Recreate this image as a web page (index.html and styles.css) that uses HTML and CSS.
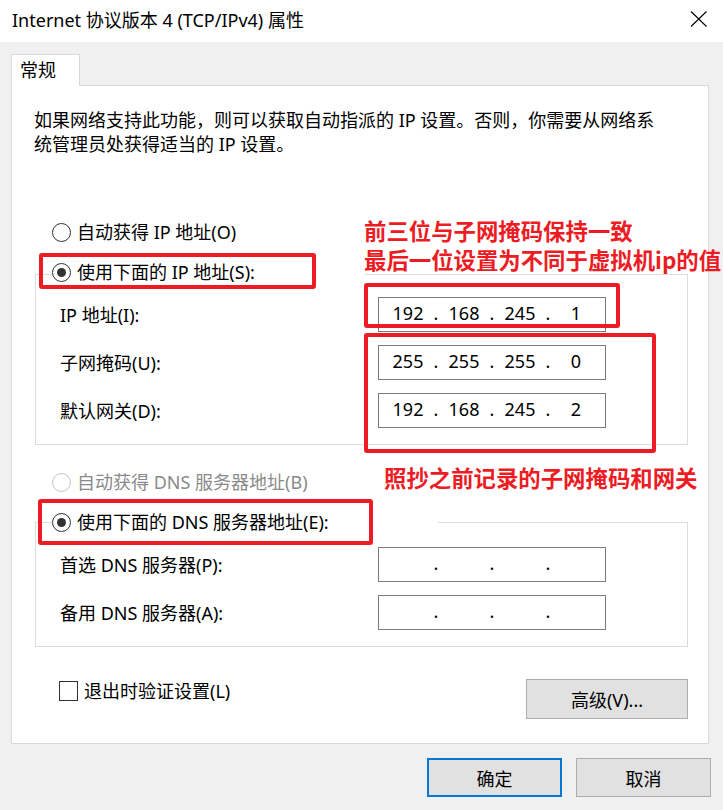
FILE: index.html
```html
<!DOCTYPE html>
<html lang="zh-CN">
  <head>
    <meta charset="UTF-8" />
    <meta name="viewport" content="width=device-width, initial-scale=1.0" />
    <title>Internet 协议版本 4 (TCP/IPv4) 属性</title>
    <link rel="stylesheet" href="styles.css">
  </head>
  <body>
    <div class="window">
      <div class="titlebar">
        <span class="title">Internet 协议版本 4 (TCP/IPv4) 属性</span>
        <svg class="close" width="17" height="16" viewBox="0 0 17 16">
          <path d="M1 0.5L16.5 15.5M16.5 0.5L1 15.5" stroke="#000" stroke-width="1.1" fill="none" />
        </svg>
      </div>

      <div class="content">
        <div class="tabs">
          <div class="tab">常规</div>
        </div>

        <div class="panel">
          <p class="desc">
            如果网络支持此功能，则可以获取自动指派的 IP 设置。否则，你需要从网络系<br />统管理员处获得适当的 IP 设置。
          </p>

          <label class="radio first"><span class="dot"></span>自动获得 IP 地址(O)</label>

          <div class="group">
            <label class="radio legend ip-legend"><span class="dot checked"></span>使用下面的 IP 地址(S):</label>
            <div class="field-row">
              <span class="field-label">IP 地址(I):</span>
              <div class="ip-box">
                <span class="octet">192</span><span class="sep">.</span>
                <span class="octet">168</span><span class="sep">.</span>
                <span class="octet">245</span><span class="sep">.</span>
                <span class="octet">1</span>
              </div>
            </div>
            <div class="field-row">
              <span class="field-label">子网掩码(U):</span>
              <div class="ip-box">
                <span class="octet">255</span><span class="sep">.</span>
                <span class="octet">255</span><span class="sep">.</span>
                <span class="octet">255</span><span class="sep">.</span>
                <span class="octet">0</span>
              </div>
            </div>
            <div class="field-row">
              <span class="field-label">默认网关(D):</span>
              <div class="ip-box">
                <span class="octet">192</span><span class="sep">.</span>
                <span class="octet">168</span><span class="sep">.</span>
                <span class="octet">245</span><span class="sep">.</span>
                <span class="octet">2</span>
              </div>
            </div>
          </div>

          <label class="radio disabled"><span class="dot"></span>自动获得 DNS 服务器地址(B)</label>

          <div class="group dns">
            <label class="radio legend dns-legend"><span class="dot checked"></span>使用下面的 DNS 服务器地址(E):</label>
            <div class="field-row">
              <span class="field-label">首选 DNS 服务器(P):</span>
              <div class="ip-box">
                <span class="octet"></span><span class="sep">.</span>
                <span class="octet"></span><span class="sep">.</span>
                <span class="octet"></span><span class="sep">.</span>
                <span class="octet"></span>
              </div>
            </div>
            <div class="field-row">
              <span class="field-label">备用 DNS 服务器(A):</span>
              <div class="ip-box">
                <span class="octet"></span><span class="sep">.</span>
                <span class="octet"></span><span class="sep">.</span>
                <span class="octet"></span><span class="sep">.</span>
                <span class="octet"></span>
              </div>
            </div>
          </div>

          <div class="options">
            <label class="check"><span class="box"></span>退出时验证设置(L)</label>
            <button type="button" class="btn advanced">高级(V)...</button>
          </div>
        </div>

        <div class="actions">
          <button type="button" class="btn default">确定</button>
          <button type="button" class="btn">取消</button>
        </div>
      </div>

      <!-- red annotations drawn over the dialog -->
      <div class="mark mark-radio-ip"></div>
      <div class="mark mark-ip"></div>
      <div class="mark mark-mask"></div>
      <div class="mark mark-radio-dns"></div>

      <div class="note note-ip">前三位与子网掩码保持一致<br />最后一位设置为不同于虚拟机ip的值</div>
      <div class="note note-mask">照抄之前记录的子网掩码和网关</div>
    </div>
  </body>
</html>
```

FILE: styles.css
```css
body {
  margin: 0;
  background: #f0f0f0;
  font-family: "Noto Sans", "Noto Sans CJK SC", sans-serif;
  font-size: 18px;
  color: #000;
}

.window {
  position: relative;
  width: 723px;
  height: 810px;
  overflow: hidden;
}

.titlebar {
  height: 42px;
  background: #fff;
  display: flex;
  align-items: center;
  justify-content: space-between;
  padding: 0 16px 0 12px;
}

.title {
  line-height: 24px;
  margin-top: -2px;
}

.close {
  margin-top: -4px;
}

.content {
  padding: 12px 14px 0 11px;
}

.tabs {
  display: flex;
}

.tab {
  position: relative;
  z-index: 1;
  box-sizing: border-box;
  width: 69px;
  height: 32px;
  margin-bottom: -1px;
  padding-left: 8px;
  line-height: 30px;
  background: #fff;
  border: 1px solid #d9d9d9;
  border-bottom: none;
}

.panel {
  box-sizing: border-box;
  height: 659px;
  padding: 22px 20px 0 23px;
  background: #fff;
  border: 1px solid #d9d9d9;
}

.desc {
  margin: 0 0 0 -1px;
  line-height: 24px;
}

.radio {
  display: flex;
  align-items: center;
  height: 24px;
  line-height: 24px;
}

.radio.first {
  margin: 64px 0 0 17px;
}

.dot {
  flex: none;
  display: flex;
  align-items: center;
  justify-content: center;
  box-sizing: border-box;
  width: 19px;
  height: 19px;
  margin-right: 6px;
  border: 1px solid #333;
  border-radius: 50%;
  background: #fff;
}

.dot.checked::after {
  content: "";
  width: 9px;
  height: 9px;
  border-radius: 50%;
  background: #333;
}

.radio.disabled {
  margin: 25px 0 0 17px;
  color: #8a8a8a;
}

.radio.disabled .dot {
  border-color: #c4c4c4;
}

.group {
  margin-top: 30px;
  padding-bottom: 16px;
  border: 1px solid #dcdcdc;
}

.group.dns {
  margin-top: 28px;
}

.legend {
  margin: -15px 0 0 16px;
  background: #fff;
}

.ip-legend {
  width: 313px;
}

.dns-legend {
  width: 386px;
  margin-top: -13px;
}

.field-row {
  display: flex;
  align-items: center;
  height: 35px;
  margin: 13px 0 0 24px;
}

.field-label {
  width: 318px;
  line-height: 24px;
}

.ip-box {
  display: flex;
  align-items: center;
  box-sizing: border-box;
  width: 228px;
  height: 35px;
  padding: 0 0 3px 7px;
  border: 1px solid #7a7a7a;
  line-height: 24px;
}

.octet {
  width: 44px;
  text-align: center;
}

.sep {
  width: 12px;
  text-align: center;
}

.options {
  display: flex;
  justify-content: space-between;
  align-items: flex-start;
  margin: 32px 0 0 24px;
}

.check {
  display: flex;
  align-items: center;
  height: 24px;
  line-height: 24px;
}

.box {
  box-sizing: border-box;
  width: 19px;
  height: 20px;
  margin-right: 6px;
  border: 1px solid #333;
  background: #fff;
}

.btn {
  box-sizing: border-box;
  width: 135px;
  height: 39px;
  padding: 0;
  font: inherit;
  color: #000;
  background: #e1e1e1;
  border: 1px solid #adadad;
}

.btn.advanced {
  width: 162px;
  height: 40px;
}

.btn.default {
  border: 2px solid #0078d7;
}

.actions {
  display: flex;
  justify-content: flex-end;
  gap: 14px;
  margin: 14px -2px 0 0;
}

/* ===== annotations ===== */
.mark {
  position: absolute;
  box-sizing: border-box;
  border: 4px solid #ed1c24;
  border-radius: 3px;
}

.mark-radio-ip {
  left: 39px;
  top: 253px;
  width: 277px;
  height: 36px;
}

.mark-ip {
  left: 364px;
  top: 283px;
  width: 256px;
  height: 45px;
}

.mark-mask {
  left: 364px;
  top: 333px;
  width: 292px;
  height: 120px;
}

.mark-radio-dns {
  left: 38px;
  top: 499px;
  width: 335px;
  height: 46px;
}

.note {
  position: absolute;
  white-space: nowrap;
  font-family: "Noto Sans CJK SC", sans-serif;
  font-size: 22.4px;
  font-weight: 700;
  line-height: 29px;
  color: #ed1c24;
}

.note-ip {
  left: 364px;
  top: 216px;
}

.note-mask {
  left: 384px;
  top: 463px;
}
```
